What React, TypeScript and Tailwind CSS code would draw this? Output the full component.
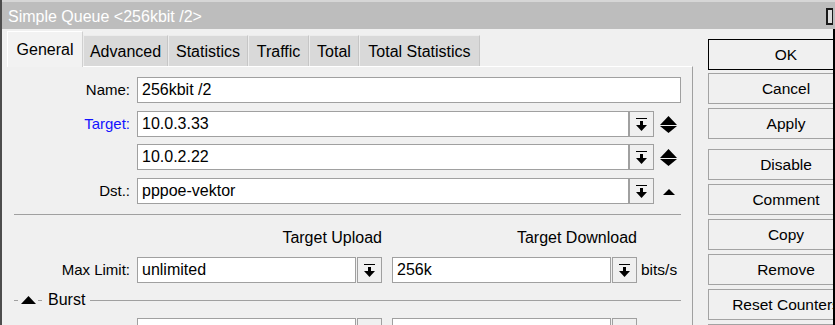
import React from "react";

const tabs = [
  { label: "General", w: "w-[76px]", active: true },
  { label: "Advanced", w: "w-[85px]" },
  { label: "Statistics", w: "w-[80px]" },
  { label: "Traffic", w: "w-[61px]" },
  { label: "Total", w: "w-[50px]" },
  { label: "Total Statistics", w: "w-[121px]" },
];

const buttons = [
  { label: "OK", mt: "mt-0", focus: true },
  { label: "Cancel", mt: "mt-[3px]" },
  { label: "Apply", mt: "mt-[4px]" },
  { label: "Disable", mt: "mt-[10px]" },
  { label: "Comment", mt: "mt-[4px]" },
  { label: "Copy", mt: "mt-[4px]" },
  { label: "Remove", mt: "mt-[4px]" },
  { label: "Reset Counters", mt: "mt-[4px]" },
  { label: "", mt: "mt-[4px]" },
];

function DropIcon() {
  return (
    <svg width="11" height="13" viewBox="0 0 11 13" fill="#000">
      <rect x="0" y="0" width="11" height="1" />
      <rect x="4" y="3" width="3" height="4" />
      <polygon points="0,7 11,7 5.5,13" />
    </svg>
  );
}

function DropBtn() {
  return (
    <div className="flex h-[26px] w-[25px] shrink-0 items-center justify-center border border-[#a0a0a0] bg-[#f0f0f0]">
      <DropIcon />
    </div>
  );
}

function Field({ value, w }: { value: string; w: string }) {
  return (
    <div className={`flex h-[26px] ${w} shrink-0 items-center border border-[#a0a0a0] bg-white pl-[4px] text-[16px] leading-[18px]`}>
      {value}
    </div>
  );
}

function Label({ text, blue }: { text: string; blue?: boolean }) {
  return (
    <div className={`w-[123px] shrink-0 text-right text-[15px] leading-[18px] ${blue ? "text-[#1414ff]" : ""}`}>
      {text}
    </div>
  );
}

function UpDown() {
  return (
    <svg width="17" height="17" viewBox="0 0 17 17" fill="#000" className="ml-[6px] shrink-0">
      <polygon points="0,9 8.5,0 17,9" />
      <polygon points="0,10 17,10 8.5,17" />
    </svg>
  );
}

export default function App() {
  return (
    <div className="flex h-[325px] w-[835px] flex-col overflow-hidden border-l-2 border-[#4d4d4d] bg-[#f0f0f0] font-['Liberation_Sans',Arial,sans-serif] text-black">
      {/* title bar */}
      <div className="flex h-[29px] shrink-0 justify-between border-t-2 border-[#d6d6d6] bg-[#bdbdbd] pl-[6px] pt-[6px] text-[16px] leading-[18px] text-white">
        <span>Simple Queue &lt;256kbit /2&gt;</span>
        <div className="mr-[2px] h-[17px] w-[7px] border-2 border-r border-[#1a1a1a] bg-[#dcdcdc]" />
      </div>

      <div className="flex min-h-0 flex-1 overflow-hidden border-r-2 border-black">
        {/* left column */}
        <div className="flex w-[706px] shrink-0 flex-col pl-[5px]">
          <div className="mt-[2px] flex h-[35px] shrink-0 items-end">
            {tabs.map((t) =>
              t.active ? (
                <div
                  key={t.label}
                  className={`relative z-10 -mb-px h-[36px] ${t.w} border-l border-t border-white border-r border-r-[#d0d0d0] bg-[#f2f2f2] pt-[9px] text-center text-[16px] leading-[18px]`}
                >
                  {t.label}
                </div>
              ) : (
                <div
                  key={t.label}
                  className={`h-[31px] ${t.w} border-l border-t border-[#ececec] border-r border-r-[#c6c6c6] bg-[#d9d9d9] pt-[7px] text-center text-[16px] leading-[18px]`}
                >
                  {t.label}
                </div>
              )
            )}
          </div>

          <div className="flex w-[686px] flex-1 flex-col border-r border-t border-r-[#a0a0a0] border-t-white">
            <div className="mt-[10px] flex items-center">
              <Label text="Name:" />
              <div className="ml-[7px]">
                <Field value="256kbit /2" w="w-[544px]" />
              </div>
            </div>

            <div className="mt-[8px] flex items-center">
              <Label text="Target:" blue />
              <div className="ml-[7px] flex items-center">
                <Field value="10.0.3.33" w="w-[492px]" />
                <DropBtn />
                <UpDown />
              </div>
            </div>

            <div className="mt-[7px] flex items-center">
              <Label text="" />
              <div className="ml-[7px] flex items-center">
                <Field value="10.0.2.22" w="w-[492px]" />
                <DropBtn />
                <UpDown />
              </div>
            </div>

            <div className="mt-[8px] flex items-center">
              <Label text="Dst.:" />
              <div className="ml-[7px] flex items-center">
                <Field value="pppoe-vektor" w="w-[492px]" />
                <DropBtn />
                <div className="ml-[6px] flex w-[17px] shrink-0 justify-center pt-[2px]">
                  <svg width="12" height="6" viewBox="0 0 12 6" fill="#000">
                    <polygon points="0,6 6,0 12,6" />
                  </svg>
                </div>
              </div>
            </div>

            <div className="ml-[7px] mt-[10px] h-px w-[667px] bg-[#a0a0a0]" />

            <div className="mt-[14px] flex text-[16px] leading-[18px]">
              <div className="w-[130px] shrink-0" />
              <div className="w-[245px] text-right">Target Upload</div>
              <div className="ml-[10px] w-[245px] text-right">Target Download</div>
            </div>

            <div className="mt-[10px] flex items-center">
              <Label text="Max Limit:" />
              <div className="ml-[7px] flex items-center">
                <Field value="unlimited" w="w-[219px]" />
                <div className="ml-px">
                  <DropBtn />
                </div>
                <div className="ml-[10px]">
                  <Field value="256k" w="w-[219px]" />
                </div>
                <div className="ml-px">
                  <DropBtn />
                </div>
                <span className="ml-[4px] text-[15.5px] leading-[18px]">bits/s</span>
              </div>
            </div>

            <div className="ml-[7px] mt-[8px] flex h-[18px] w-[667px] items-center">
              <div className="h-px w-[4px] bg-[#a0a0a0]" />
              <svg width="15" height="8" viewBox="0 0 15 8" fill="#000" className="ml-[3px]">
                <polygon points="0,8 7.5,0 15,8" />
              </svg>
              <div className="ml-[2px] h-px w-[4px] bg-[#a0a0a0]" />
              <span className="ml-[6px] text-[16px] leading-[18px]">Burst</span>
              <div className="ml-[5px] h-px flex-1 bg-[#a0a0a0]" />
            </div>

            <div className="mt-[9px] flex items-center">
              <Label text="" />
              <div className="ml-[7px] flex items-center">
                <Field value="" w="w-[219px]" />
                <div className="ml-px">
                  <DropBtn />
                </div>
                <div className="ml-[10px]">
                  <Field value="" w="w-[219px]" />
                </div>
                <div className="ml-px">
                  <DropBtn />
                </div>
              </div>
            </div>
          </div>
        </div>

        {/* buttons */}
        <div className="flex w-[156px] shrink-0 flex-col pt-[10px]">
          {buttons.map((b, i) => (
            <div
              key={i}
              className={`${b.mt} flex h-[31px] shrink-0 items-center justify-center whitespace-nowrap border ${
                b.focus ? "border-black" : "border-[#a3a3a3]"
              } bg-[#f0f0f0] text-[15.5px] leading-[18px]`}
            >
              {b.label}
            </div>
          ))}
        </div>
      </div>
    </div>
  );
}
